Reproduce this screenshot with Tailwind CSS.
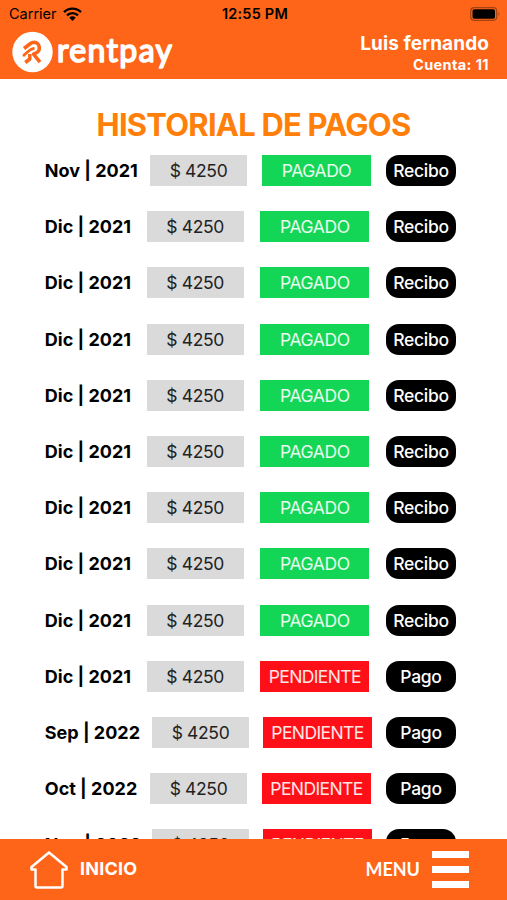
<!DOCTYPE html>
<html lang="es">
<head>
    <meta charset="UTF-8">
    <meta name="viewport" content="width=device-width, initial-scale=1.0">
    <script src="https://cdn.jsdelivr.net/npm/@tailwindcss/browser@4"></script>
    <title>Rentpay - Historial de pagos</title>
</head>
<body class="flex flex-col h-[900px] overflow-hidden bg-white font-['Inter',sans-serif]">

    <header class="shrink-0 h-[79px] bg-[#ff6518]">
        <div class="grid grid-cols-3 items-center h-[27px] pl-[9px] pr-[6px] text-black">
            <div class="flex items-center gap-[6px] text-[14.5px]">
                <span>Carrier</span>
                <svg class="w-[19px] h-[14px]" viewBox="0 0 19 14" fill="none" stroke="#000" stroke-width="2.4">
                    <path d="M1 5.2a12 12 0 0 1 17 0" />
                    <path d="M4 8.4a7.8 7.8 0 0 1 11 0" />
                    <path d="M9.500 14L6.300 10.700a4.500 4.500 0 0 1 6.400 0z" fill="#000" stroke="none" />
                </svg>
            </div>
            <span class="text-center text-[14.5px] font-semibold tracking-[0.2px] whitespace-nowrap">12:55 PM</span>
            <svg class="justify-self-end w-[31px] h-[14px]" viewBox="0 0 31 14">
                <rect x=".7" y=".7" width="26" height="12.6" rx="3.5" fill="none" stroke="#a34212" stroke-width="1.200" />
                <rect x="2.500" y="2.300" width="22.500" height="9.400" rx="1.800" fill="#000" />
                <path d="M28.500 5q2 2 0 4z" fill="#a34212" />
            </svg>
        </div>
        <div class="flex justify-between pl-3 pr-[18px] text-white">
            <svg class="w-[165px] h-[48px]" viewBox="0 0 165 48">
                <circle cx="20.500" cy="25" r="20.200" fill="#fff" />
                <g fill="none" stroke="#ff6518" stroke-width="3.500" stroke-linejoin="round">
                    <path d="M12 21.500l6.500-5q1.500-1.200 3.500-1.200a5.600 5.600 0 0 1 2 10.700l-2.500 1.200 6.500 8" />
                    <path d="M12 29.500v-1.500l6-5q2-1.500 4.500-1.500" stroke-width="2.800" />
                    <path d="M17.800 27v5l-4.500 3.500" />
                </g>
                <text x="45" y="34.500" textLength="115" lengthAdjust="spacing" fill="#fff" stroke="#fff" stroke-width="1.600" stroke-linejoin="round" font-family="Lato, sans-serif" font-weight="400" font-size="32">rentpay</text>
            </svg>
            <div class="pt-[5px] text-right font-bold">
                <p class="text-[19px] leading-[24px] tracking-[0.1px]">Luis fernando</p>
                <p class="text-[14.5px] leading-[17px] tracking-[0.4px]">Cuenta: 11</p>
            </div>
        </div>
    </header>

    <main class="flex-1 min-h-0 overflow-hidden pl-[44px] pr-[51px] pt-[28px]">
        <h1 class="h-[48px] -ml-[1px] -mr-[8px] text-center text-[31px] leading-[36px] font-bold tracking-[-0.8px] text-[#ff7f0a] whitespace-nowrap">HISTORIAL DE PAGOS</h1>
        <div id="payments" class="flex flex-col gap-[25.2px]"></div>
    </main>

    <footer class="shrink-0 flex items-center justify-between h-[61px] pl-[30px] pr-[38px] bg-[#ff6518] text-white">
        <a class="flex items-center gap-3">
            <svg class="w-[38px] h-[38px]" viewBox="0 0 38 38" fill="none" stroke="#fff" stroke-width="2.500" stroke-linejoin="round">
                <path d="M19 1.500L1.500 16v2.500h4V35q0 1.500 1.500 1.500h24q1.500 0 1.500-1.500V18.500h4V16z" />
            </svg>
            <span class="pb-[2px] text-[18px] font-bold tracking-[0.2px]">INICIO</span>
        </a>
        <a class="flex items-center gap-3">
            <span class="pb-[1px] font-['Lato',sans-serif] text-[18px] font-bold">MENU</span>
            <span class="flex flex-col gap-[8px] w-[37px]">
                <span class="h-[7px] bg-white"></span>
                <span class="h-[7px] bg-white"></span>
                <span class="h-[7px] bg-white"></span>
            </span>
        </a>
    </footer>

    <script>
        var labelWidth = { Nov: 'w-[91px]', Dic: 'w-[86px]', Sep: 'w-[94px]', Oct: 'w-[91px]' };
        var payments = [
            ['Nov', 2021, true],
            ['Dic', 2021, true],
            ['Dic', 2021, true],
            ['Dic', 2021, true],
            ['Dic', 2021, true],
            ['Dic', 2021, true],
            ['Dic', 2021, true],
            ['Dic', 2021, true],
            ['Dic', 2021, true],
            ['Dic', 2021, false],
            ['Sep', 2022, false],
            ['Oct', 2022, false],
            ['Nov', 2022, false]
        ];

        document.getElementById('payments').innerHTML = payments.map(function (p) {
            var width = p[0] === 'Nov' && p[1] === 2022 ? 'w-[94px]' : labelWidth[p[0]];
            var color = p[2] ? 'bg-[#14d656]' : 'bg-[#ff1018]';
            var tracking = p[2] ? 'tracking-[-0.4px]' : 'tracking-[-0.6px]';
            return `
                <div class="flex justify-between h-[31px] leading-[31px] text-center whitespace-nowrap">
                    <span class="${width} pl-[0.8px] text-left text-[18px] font-bold text-black">${p[0]} | ${p[1]}</span>
                    <span class="w-[97px] bg-[#dadada] text-[17.5px] tracking-[-0.35px] text-[#222]">$ 4250</span>
                    <span class="w-[109px] ${color} ${tracking} text-[17.5px] text-white/90">${p[2] ? 'PAGADO' : 'PENDIENTE'}</span>
                    <button class="w-[70px] rounded-[13px] bg-black text-[17.5px] tracking-[-0.3px] font-medium text-white">${p[2] ? 'Recibo' : 'Pago'}</button>
                </div>`;
        }).join('');
    </script>
</body>
</html>
